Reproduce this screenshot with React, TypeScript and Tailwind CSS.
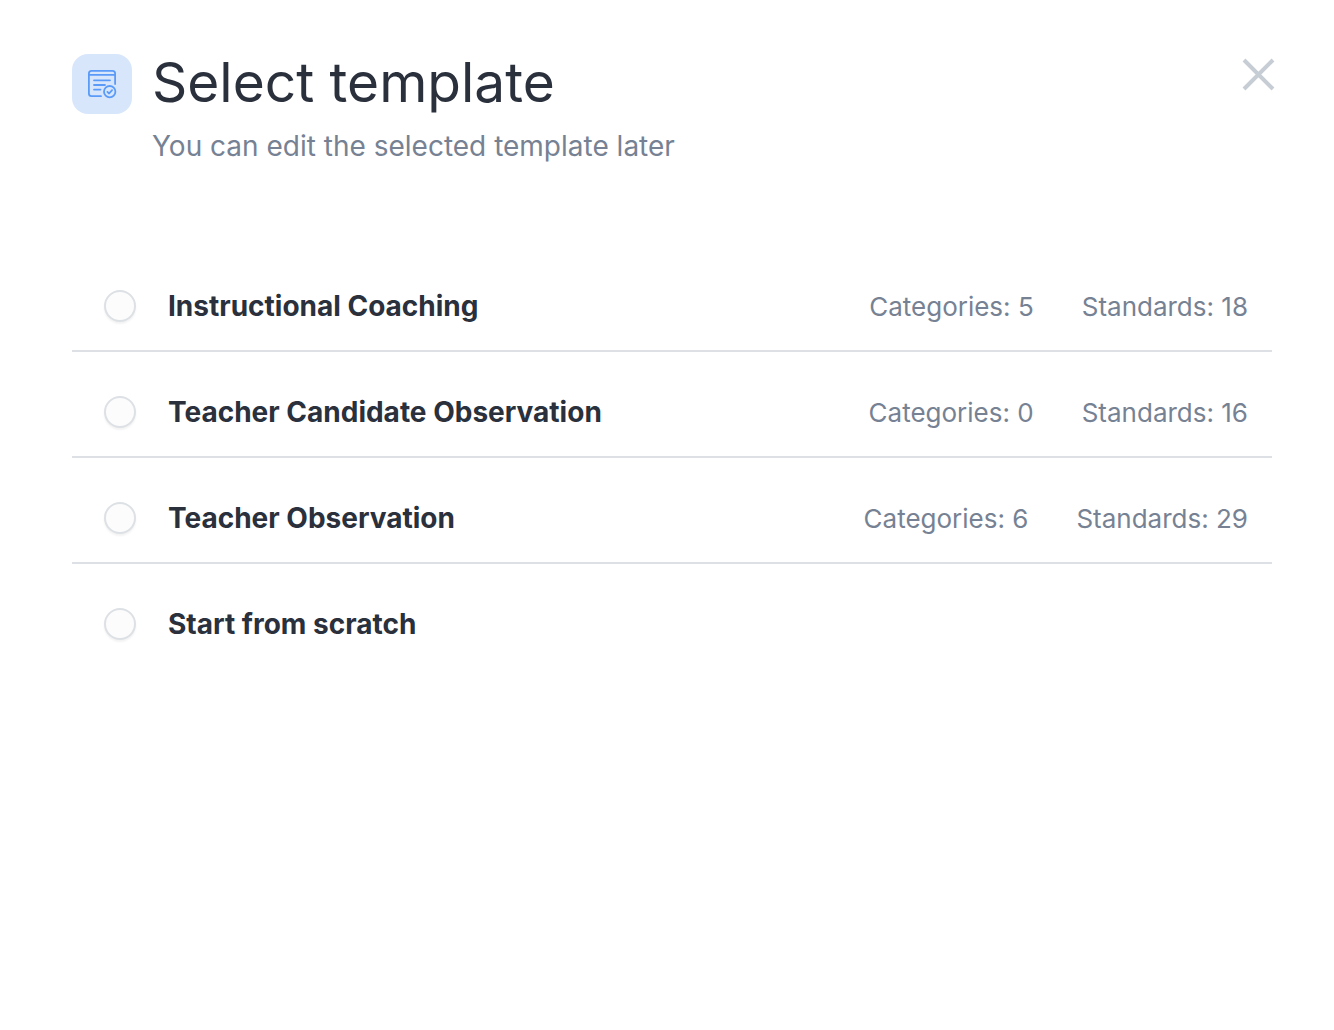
import { useState } from 'react';

const templates = [
  { id: 'coaching', name: 'Instructional Coaching', categories: 5, standards: 18 },
  { id: 'candidate', name: 'Teacher Candidate Observation', categories: 0, standards: 16 },
  { id: 'observation', name: 'Teacher Observation', categories: 6, standards: 29 },
  { id: 'scratch', name: 'Start from scratch' },
];

function TemplateIcon() {
  return (
    <svg width="60" height="60" viewBox="0 0 60 60" fill="none" stroke="#5b9bf8" strokeWidth="1.8" strokeLinecap="round" strokeLinejoin="round" aria-hidden="true">
      <path d="M29 42.2H19.5a2.6 2.6 0 0 1-2.6-2.6V19.4a2.6 2.6 0 0 1 2.6-2.6h21a2.6 2.6 0 0 1 2.6 2.6V30" />
      <path d="M17 20.8h26M22 26.3h16M22 31h11M22 35.6h6.5" />
      <circle cx="37.7" cy="37.7" r="5.7" />
      <path d="m35.4 37.9 1.7 1.6 3-3.3" />
    </svg>
  );
}

export default function App() {
  const [selected, setSelected] = useState('');

  return (
    <div className="min-h-screen bg-white pt-[54px] pr-[62px] pl-[72px] font-['Inter',sans-serif] text-[#2a303c]">
      {/* Header */}
      <header className="flex items-start">
        <div className="size-[60px] shrink-0 rounded-2xl bg-[#d8e6fc]">
          <TemplateIcon />
        </div>
        <div className="ml-5 flex-1">
          <h1 className="text-[55px] leading-[56px]">Select template</h1>
          <p className="mt-4 text-[28px] leading-10 text-[#768293]">You can edit the selected template later</p>
        </div>
        <button type="button" aria-label="Close" className="-mr-2 p-1">
          <svg width="34" height="34" viewBox="0 0 34 34" fill="none" stroke="#c7cdd5" strokeWidth="4">
            <path d="M2 2l29 29M31 2L2 31" />
          </svg>
        </button>
      </header>

      {/* Template list */}
      <ul className="mt-20">
        {templates.map((template) => (
          <li key={template.id} className="border-b-2 border-[#dde1e5] last:border-b-0">
            <label className="flex items-center gap-8 pt-11 pr-6 pb-7 pl-8">
              <input
                type="radio"
                name="template"
                value={template.id}
                checked={selected === template.id}
                onChange={() => setSelected(template.id)}
                className="size-8 shrink-0 appearance-none rounded-full border-2 border-[#dde1e5] bg-[#fcfcfc] shadow-[0_2px_2px_rgba(0,0,0,0.05)] checked:border-[9px] checked:border-[#5b9bf8]"
              />
              <span className="flex h-8 flex-1 items-baseline justify-between">
                <span className="text-[28px] leading-8 font-bold">{template.name}</span>
                {template.standards !== undefined && (
                  <span className="flex gap-12 text-[26px] leading-8 text-[#768293]">
                    <span>Categories: {template.categories}</span>
                    <span>Standards: {template.standards}</span>
                  </span>
                )}
              </span>
            </label>
          </li>
        ))}
      </ul>
    </div>
  );
}
